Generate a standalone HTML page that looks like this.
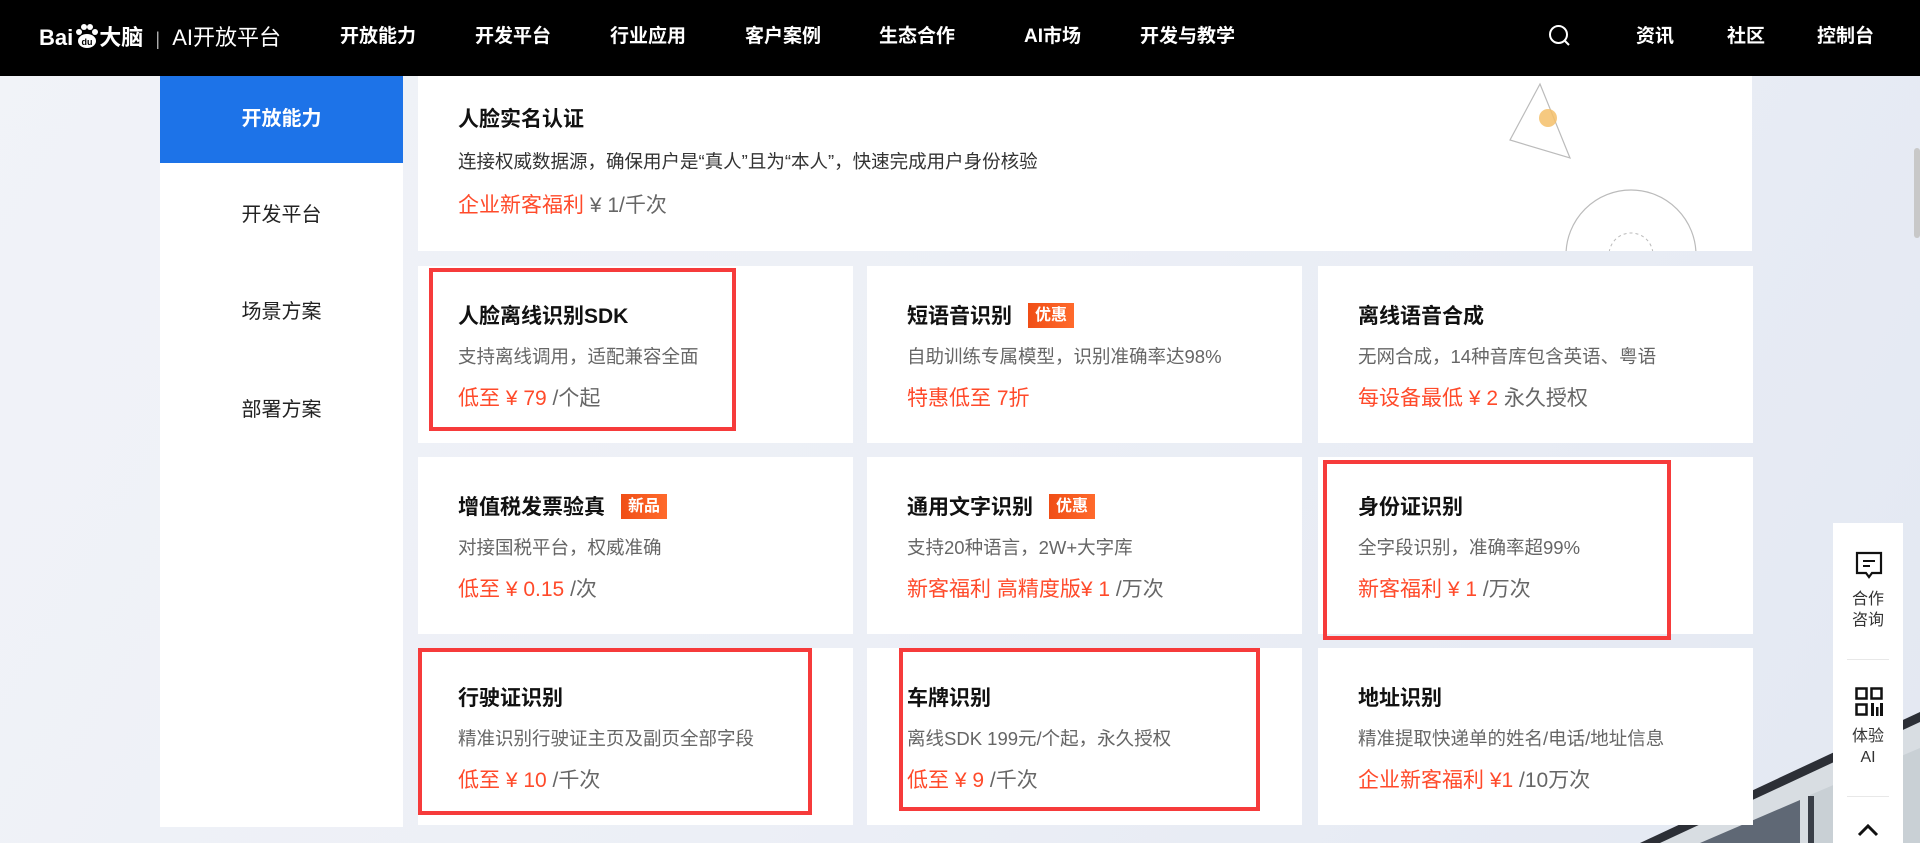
<!DOCTYPE html>
<html><head><meta charset="utf-8">
<style>
*{margin:0;padding:0;box-sizing:border-box}
body{width:1920px;height:843px;overflow:hidden;position:relative;font-family:"Liberation Sans","Noto Sans CJK SC",sans-serif;background:linear-gradient(120deg,#f1f3f8 0%,#eceff6 50%,#e3e8f2 100%)}
.hdr{position:absolute;left:0;top:0;width:1920px;height:76px;background:#000;color:#fff}
.hdr .n{position:absolute;top:21px;font-size:19px;font-weight:bold;white-space:nowrap}
.logo{position:absolute;left:39px;top:20px;font-size:22px;color:#fff;white-space:nowrap}
.side{position:absolute;left:160px;top:76px;width:243px;height:751px;background:#fff}
.side div{position:absolute;left:0;width:243px;text-align:center;font-size:20px;color:#222}
.side .act{top:0;height:87px;line-height:87px;background:#1d73e8;color:#fff;font-weight:bold}
.card{position:absolute;background:#fff;width:435px;height:177px}
.t{position:absolute;left:40px;top:34px;font-size:21px;font-weight:bold;color:#111;white-space:nowrap}
.d{position:absolute;left:40px;top:77px;font-size:18.5px;color:#666;white-space:nowrap}
.p{position:absolute;left:40px;top:116px;font-size:21px;color:#ff4a2a;white-space:nowrap}
.p span{color:#666}
.b{display:inline-block;background:linear-gradient(90deg,#f04e16,#ff6a2c);color:#fff;font-size:16px;font-weight:bold;padding:1px 7px;margin-left:16px;vertical-align:3px;line-height:23px}
.rb{position:absolute;border:4px solid #f63b3b}
.fl{position:absolute;left:1833px;top:523px;width:70px;height:320px;background:#fff;text-align:center;font-size:16px;color:#333;line-height:21px}
</style></head><body>
<svg style="position:absolute;left:0;top:0" width="1920" height="843">
<polygon points="1640,843 1920,715 1920,843" fill="#d8dde2"/>
<polygon points="1640,843 1920,712 1920,722 1660,843" fill="#2c2f36"/>
<polygon points="1700,843 1800,800 1800,843" fill="#5f6875"/>
<polygon points="1810,795 1920,748 1920,843 1810,843" fill="#c9d0d5"/>
<rect x="1808" y="796" width="6" height="47" fill="#3a3f48"/>
</svg>
<div class="hdr">
 <div class="logo"><b>Bai</b><svg width="26" height="26" style="vertical-align:-4px" viewBox="0 0 26 26"><circle cx="6" cy="9" r="3" fill="#fff"/><circle cx="11" cy="4" r="3" fill="#fff"/><circle cx="17" cy="4" r="3" fill="#fff"/><circle cx="22" cy="9" r="3" fill="#fff"/><ellipse cx="14" cy="18" rx="9" ry="7" fill="#fff"/><text x="14" y="22" font-size="9" font-weight="bold" text-anchor="middle" fill="#000" font-family="Liberation Sans">du</text></svg><b>大脑</b> <span style="font-size:18px;margin:0 6px;color:#aaa">|</span> AI开放平台</div>
 <div class="n" style="left:340px">开放能力</div>
 <div class="n" style="left:475px">开发平台</div>
 <div class="n" style="left:610px">行业应用</div>
 <div class="n" style="left:745px">客户案例</div>
 <div class="n" style="left:879px">生态合作</div>
 <div class="n" style="left:1024px">AI市场</div>
 <div class="n" style="left:1140px">开发与教学</div>
 <svg style="position:absolute;left:1548px;top:24px" width="24" height="24"><circle cx="10.5" cy="10.5" r="8.5" fill="none" stroke="#fff" stroke-width="2"/><line x1="17" y1="17" x2="21" y2="21" stroke="#fff" stroke-width="2"/></svg>
 <div class="n" style="left:1636px">资讯</div>
 <div class="n" style="left:1727px">社区</div>
 <div class="n" style="left:1817px">控制台</div>
</div>
<div style="position:absolute;right:0;top:148px;width:6px;height:90px;background:#c8c8c8;border-radius:3px"></div>
<div class="side">
 <div class="act">开放能力</div>
 <div style="top:122px">开发平台</div>
 <div style="top:219px">场景方案</div>
 <div style="top:317px">部署方案</div>
</div>
<div class="card" style="left:418px;top:76px;width:1334px;height:175px;overflow:hidden">
 <div class="t" style="top:27px">人脸实名认证</div>
 <div class="d" style="top:72px;color:#333">连接权威数据源，确保用户是“真人”且为“本人”，快速完成用户身份核验</div>
 <div class="p" style="top:113px">企业新客福利 <span>¥ 1/千次</span></div>
 <svg style="position:absolute;left:1080px;top:0" width="220" height="175"><polygon points="42,8 12,64 72,82" fill="none" stroke="#bbb" stroke-width="1.2"/><circle cx="50" cy="42" r="9" fill="#f5c06a" opacity=".85"/><circle cx="133" cy="179" r="65" fill="none" stroke="#bbb" stroke-width="1.2"/><circle cx="133" cy="179" r="22" fill="none" stroke="#bbb" stroke-dasharray="3,3"/></svg>
</div>
<div class="card" style="left:418px;top:266px"><div class="t">人脸离线识别SDK</div><div class="d">支持离线调用，适配兼容全面</div><div class="p">低至 ¥ 79 <span>/个起</span></div></div>
<div class="card" style="left:867px;top:266px"><div class="t">短语音识别<span class="b">优惠</span></div><div class="d">自助训练专属模型，识别准确率达98%</div><div class="p">特惠低至 7折</div></div>
<div class="card" style="left:1318px;top:266px"><div class="t">离线语音合成</div><div class="d">无网合成，14种音库包含英语、粤语</div><div class="p">每设备最低 ¥ 2 <span>永久授权</span></div></div>
<div class="card" style="left:418px;top:457px"><div class="t">增值税发票验真<span class="b">新品</span></div><div class="d">对接国税平台，权威准确</div><div class="p">低至 ¥ 0.15 <span>/次</span></div></div>
<div class="card" style="left:867px;top:457px"><div class="t">通用文字识别<span class="b">优惠</span></div><div class="d">支持20种语言，2W+大字库</div><div class="p">新客福利 高精度版¥ 1 <span>/万次</span></div></div>
<div class="card" style="left:1318px;top:457px"><div class="t">身份证识别</div><div class="d">全字段识别，准确率超99%</div><div class="p">新客福利 ¥ 1 <span>/万次</span></div></div>
<div class="card" style="left:418px;top:648px"><div class="t">行驶证识别</div><div class="d">精准识别行驶证主页及副页全部字段</div><div class="p">低至 ¥ 10 <span>/千次</span></div></div>
<div class="card" style="left:867px;top:648px"><div class="t">车牌识别</div><div class="d">离线SDK 199元/个起，永久授权</div><div class="p">低至 ¥ 9 <span>/千次</span></div></div>
<div class="card" style="left:1318px;top:648px"><div class="t">地址识别</div><div class="d">精准提取快递单的姓名/电话/地址信息</div><div class="p">企业新客福利 ¥1 <span>/10万次</span></div></div>
<div class="rb" style="left:429px;top:268px;width:307px;height:163px"></div>
<div class="rb" style="left:1323px;top:460px;width:348px;height:180px"></div>
<div class="rb" style="left:418px;top:648px;width:394px;height:167px"></div>
<div class="rb" style="left:899px;top:648px;width:361px;height:163px"></div>
<div class="fl">
 <svg style="position:absolute;left:22px;top:28px" width="28" height="30"><path d="M2 2H26V22H17L14 26L11 22H2Z" fill="none" stroke="#111" stroke-width="2.2"/><line x1="8" y1="10" x2="20" y2="10" stroke="#111" stroke-width="2"/><line x1="8" y1="15" x2="15" y2="15" stroke="#111" stroke-width="2"/></svg>
 <div style="position:absolute;left:0;top:66px;width:70px">合作<br>咨询</div>
 <div style="position:absolute;left:14px;top:136px;width:42px;height:1px;background:#e8e8e8"></div>
 <svg style="position:absolute;left:22px;top:164px" width="28" height="30"><rect x="1.5" y="1.5" width="10" height="10" fill="none" stroke="#111" stroke-width="2.5"/><rect x="16.5" y="1.5" width="10" height="10" fill="none" stroke="#111" stroke-width="2.5"/><rect x="1.5" y="17.5" width="10" height="10" fill="none" stroke="#111" stroke-width="2.5"/><rect x="16" y="16" width="3" height="13" fill="#111"/><rect x="21" y="20" width="2.5" height="9" fill="#111"/><rect x="25" y="16" width="3" height="13" fill="#111"/></svg>
 <div style="position:absolute;left:0;top:203px;width:70px">体验<br>AI</div>
 <div style="position:absolute;left:14px;top:273px;width:42px;height:1px;background:#e8e8e8"></div>
 <svg style="position:absolute;left:24px;top:300px" width="22" height="14"><path d="M2 12L11 3L20 12" fill="none" stroke="#111" stroke-width="3"/></svg>
</div>
</body></html>
